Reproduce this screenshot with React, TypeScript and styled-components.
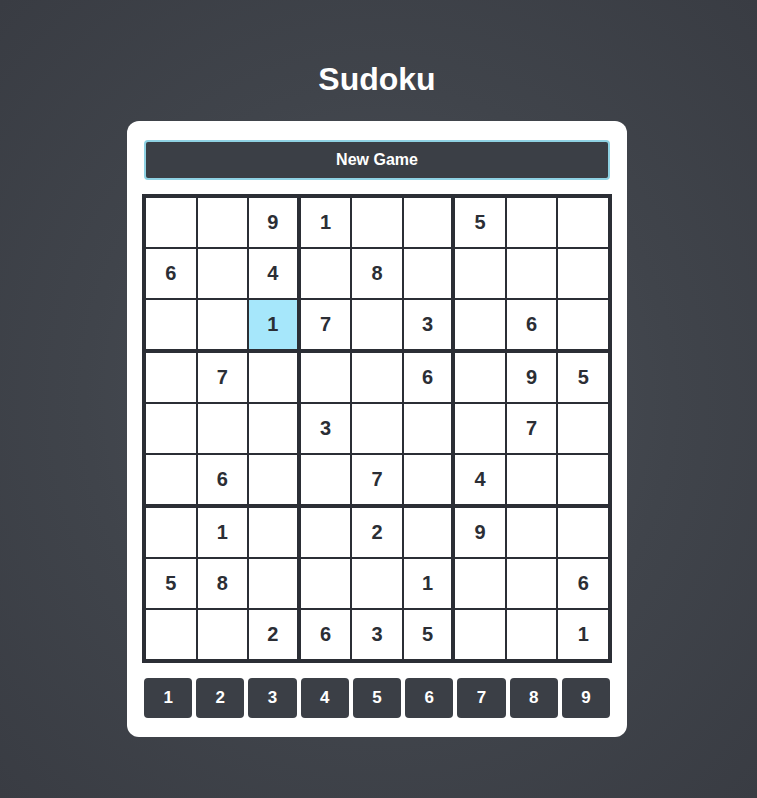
import React from "react";
import styled, { createGlobalStyle } from "styled-components";

const GlobalStyle = createGlobalStyle`
  html, body { margin: 0; padding: 0; }
  body {
    min-height: 100vh;
    font-family: "Liberation Sans", Arial, sans-serif;
    background: radial-gradient(ellipse at 50% 50%, #4c5159 0%, #40444b 55%, #393c43 100%);
    background-attachment: fixed;
  }
  * { box-sizing: border-box; }
`;

const Page = styled.div`
  min-height: 100vh;
  display: flex;
  flex-direction: column;
  align-items: center;
  padding-top: 61px;
  padding-right: 3px;
`;

const Title = styled.h1`
  margin: 0 0 23px;
  font-size: 32px;
  line-height: 37px;
  font-weight: 700;
  color: #ffffff;
`;

const Card = styled.div`
  width: 500px;
  background: #ffffff;
  border-radius: 12px;
  padding: 19px 17px 19px;
  display: flex;
  flex-direction: column;
`;

const NewGameButton = styled.button`
  height: 40px;
  width: 100%;
  border: 2px solid #8fd2e3;
  border-radius: 4px;
  background: #3b3f46;
  color: #ffffff;
  font-family: "Liberation Sans", Arial, sans-serif;
  font-weight: 700;
  font-size: 16px;
  cursor: pointer;
`;

const Board = styled.div`
  margin: 14px -2px 0;
  border: 3px solid #2b2e35;
  display: grid;
  grid-template-columns: repeat(9, 1fr);
`;

const Cell = styled.div<{ $thickRight: boolean; $thickBottom: boolean; $selected: boolean }>`
  height: ${(p) => (p.$thickBottom ? 53 : 51)}px;
  border: 1px solid #2b2e35;
  border-right-width: ${(p) => (p.$thickRight ? 3 : 1)}px;
  border-bottom-width: ${(p) => (p.$thickBottom ? 3 : 1)}px;
  background: ${(p) => (p.$selected ? "#a6e7fb" : "#ffffff")};
  display: flex;
  align-items: center;
  justify-content: center;
  font-size: 20px;
  font-weight: 700;
  color: #2b2e35;
`;

const NumberRow = styled.div`
  margin-top: 15px;
  display: grid;
  grid-template-columns: repeat(9, 1fr);
  gap: 4px;
`;

const NumberButton = styled.button`
  height: 40px;
  border: none;
  border-radius: 4px;
  background: #3b3f46;
  color: #ffffff;
  font-family: "Liberation Sans", Arial, sans-serif;
  font-weight: 700;
  font-size: 17px;
  padding: 0;
  cursor: pointer;
`;

const puzzle = [
  "009100500",
  "604080000",
  "001703060",
  "070006095",
  "000300070",
  "060070400",
  "010020900",
  "580001006",
  "002635001",
];

export default function App() {
  return (
    <>
      <GlobalStyle />
      <Page>
        <Title>Sudoku</Title>
        <Card>
          <NewGameButton>New Game</NewGameButton>
          <Board>
            {puzzle.map((row, r) =>
              row.split("").map((ch, c) => (
                <Cell
                  key={`${r}-${c}`}
                  $thickRight={c === 2 || c === 5}
                  $thickBottom={r === 2 || r === 5}
                  $selected={r === 2 && c === 2}
                >
                  {ch === "0" ? "" : ch}
                </Cell>
              ))
            )}
          </Board>
          <NumberRow>
            {[1, 2, 3, 4, 5, 6, 7, 8, 9].map((n) => (
              <NumberButton key={n}>{n}</NumberButton>
            ))}
          </NumberRow>
        </Card>
      </Page>
    </>
  );
}
